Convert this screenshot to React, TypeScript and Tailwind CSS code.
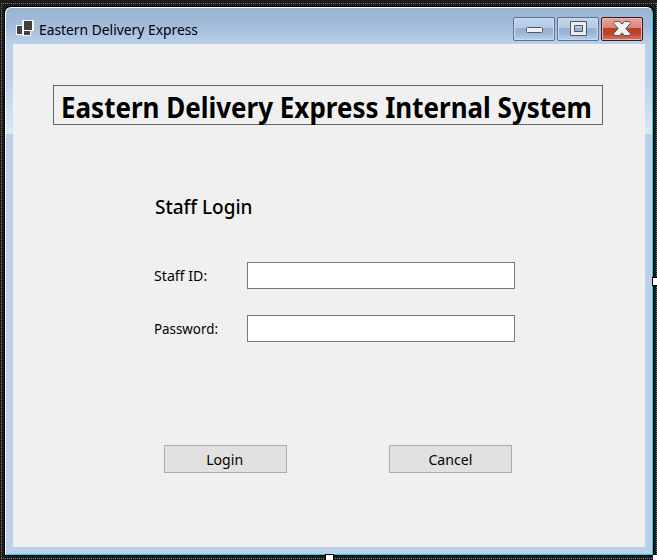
import React from "react";

function AppIcon() {
  return (
    <svg width="18" height="17" viewBox="0 0 18 17" shapeRendering="crispEdges" className="shrink-0">
      <path d="M0 5H6V0H18V11H15V16H6V15H0Z" fill="#f4f7fa" />
      <path d="M1 6H6V14H1ZM8 1H16V10H8ZM8 11H14V15H8Z" fill="#424242" />
    </svg>
  );
}

function CaptionButton({ close = false, children }: { close?: boolean; children: React.ReactNode }) {
  const tone = close
    ? "border-[#431422] bg-[linear-gradient(#e5a79b_0px,#d98474_10px,#b8402a_10px,#bd452c_16px,#d57a62_22px)] shadow-[inset_0_0_0_1px_#e9b5aa]"
    : "border-[#5d7290] bg-[linear-gradient(#c2d6eb_0px,#b5cce5_10px,#96b0cd_10px,#9bb5d2_15px,#b9d1eb_22px)] shadow-[inset_0_0_0_1px_#c8dcf1]";
  return (
    <button className={`flex h-6 w-[42px] items-center justify-center rounded-[2px] border ${tone}`}>
      {children}
    </button>
  );
}

function Field({ label, fit, type }: { label: string; fit: string; type: string }) {
  return (
    <label className="flex h-[27px] items-center">
      <span className="w-[93px] whitespace-nowrap text-[15px] leading-[27px]">
        <span className={`inline-block origin-left ${fit}`}>{label}</span>
      </span>
      <input type={type} className="h-[27px] w-[268px] border border-[#7a7a7a] bg-white px-1 outline-none" />
    </label>
  );
}

function FormButton({ children }: { children: React.ReactNode }) {
  return (
    <button className="h-7 w-[123px] border border-[#adadad] bg-[#e1e1e1] pr-px text-[15px] leading-[26px]">
      <span className="inline-block scale-x-[.94]">{children}</span>
    </button>
  );
}

export default function App() {
  return (
    <div className="relative h-[560px] w-[657px] overflow-hidden bg-[#1c1c1c] pl-1 pt-1.5 font-['Noto_Sans',sans-serif] text-black">
      <svg width="657" height="560" className="pointer-events-none absolute left-0 top-0" shapeRendering="crispEdges">
        <path d="M1 3.5H657M1 558.5H657" stroke="#777" strokeDasharray="1 1" />
        <path d="M1.5 3V558M656.5 3V558" stroke="#777" strokeDasharray="1 1" />
      </svg>

      <div className="relative h-[550px] w-[650px] rounded-t-[6px] bg-black p-px">
        <div className="flex h-[548px] w-[648px] flex-col rounded-t-[6px] border border-b-[#20cce8] border-l-white border-r-[#20cce8] border-t-white bg-[linear-gradient(#99b4d1_0px,#a2bcd9_18px,#b9d1ea_36px,#b9d1ea_70px,#dce8f5_126px,#b9d1ea_126px)]">
          <header className="flex h-9 shrink-0 pl-2.5 pr-[9px]">
            <div className="mt-3">
              <AppIcon />
            </div>
            <h1 className="ml-[5px] mt-[11px] origin-left scale-x-[.922] whitespace-nowrap text-[15px] leading-5">
              Eastern Delivery Express
            </h1>
            <div className="ml-auto mt-[9px] flex gap-0.5">
              <CaptionButton>
                <svg width="17" height="6" viewBox="0 0 17 6" className="mt-0.5">
                  <rect x=".5" y=".5" width="16" height="5" rx="1" fill="#f1f1f1" stroke="#535666" />
                </svg>
              </CaptionButton>
              <CaptionButton>
                <svg width="17" height="15" viewBox="0 0 17 15" className="-mt-px">
                  <path d="M.5 .5H16.5V14.5H.5ZM4.5 4.5V10.5H12.5V4.5Z" fill="#eeeeee" fillRule="evenodd" stroke="#535666" strokeLinejoin="round" />
                </svg>
              </CaptionButton>
              <CaptionButton close>
                <svg width="18" height="15" viewBox="0 0 18 15" className="-mt-px">
                  <path d="M1.5 .5H6.3L9 3.1L11.7 .5H16.5L17.5 2.3L12.8 7.5L17.5 12.7L16.5 14.5H11.7L9 11.9L6.3 14.5H1.5L.5 12.7L5.2 7.5L.5 2.3Z" fill="#f3f3f3" stroke="#535666" strokeLinejoin="round" />
                </svg>
              </CaptionButton>
            </div>
          </header>

          <main className="ml-[7px] h-[503px] w-[632px] bg-[#f0f0f0] pt-[41px]">
            <h2 className="ml-10 h-10 w-[550px] whitespace-nowrap border border-[#646464] pl-[7px] text-[28px] font-bold leading-[42px]">
              <span className="inline-block origin-left scale-x-[.928]">Eastern Delivery Express Internal System</span>
            </h2>
            <form onSubmit={(event) => event.preventDefault()}>
              <div className="ml-[141px] mt-[68px]">
                <h3 className="h-7 whitespace-nowrap pl-px text-[19px] font-medium leading-7 tracking-[-0.02px]">Staff Login</h3>
                <div className="mt-[41px] flex flex-col gap-[26px]">
                  <Field label="Staff ID:" fit="scale-x-[.945]" type="text" />
                  <Field label="Password:" fit="scale-x-[.89]" type="password" />
                </div>
              </div>
              <div className="ml-[151px] mt-[103px] flex gap-[102px]">
                <FormButton>Login</FormButton>
                <FormButton>Cancel</FormButton>
              </div>
            </form>
          </main>
        </div>
      </div>

      <span className="absolute left-[652px] top-[277px] h-[9px] w-[9px] border border-black bg-white" />
      <span className="absolute left-[325px] top-[554px] h-[9px] w-[9px] border border-black bg-white" />
      <span className="absolute left-[653px] top-[555px] h-2 w-2 bg-white" />
    </div>
  );
}
